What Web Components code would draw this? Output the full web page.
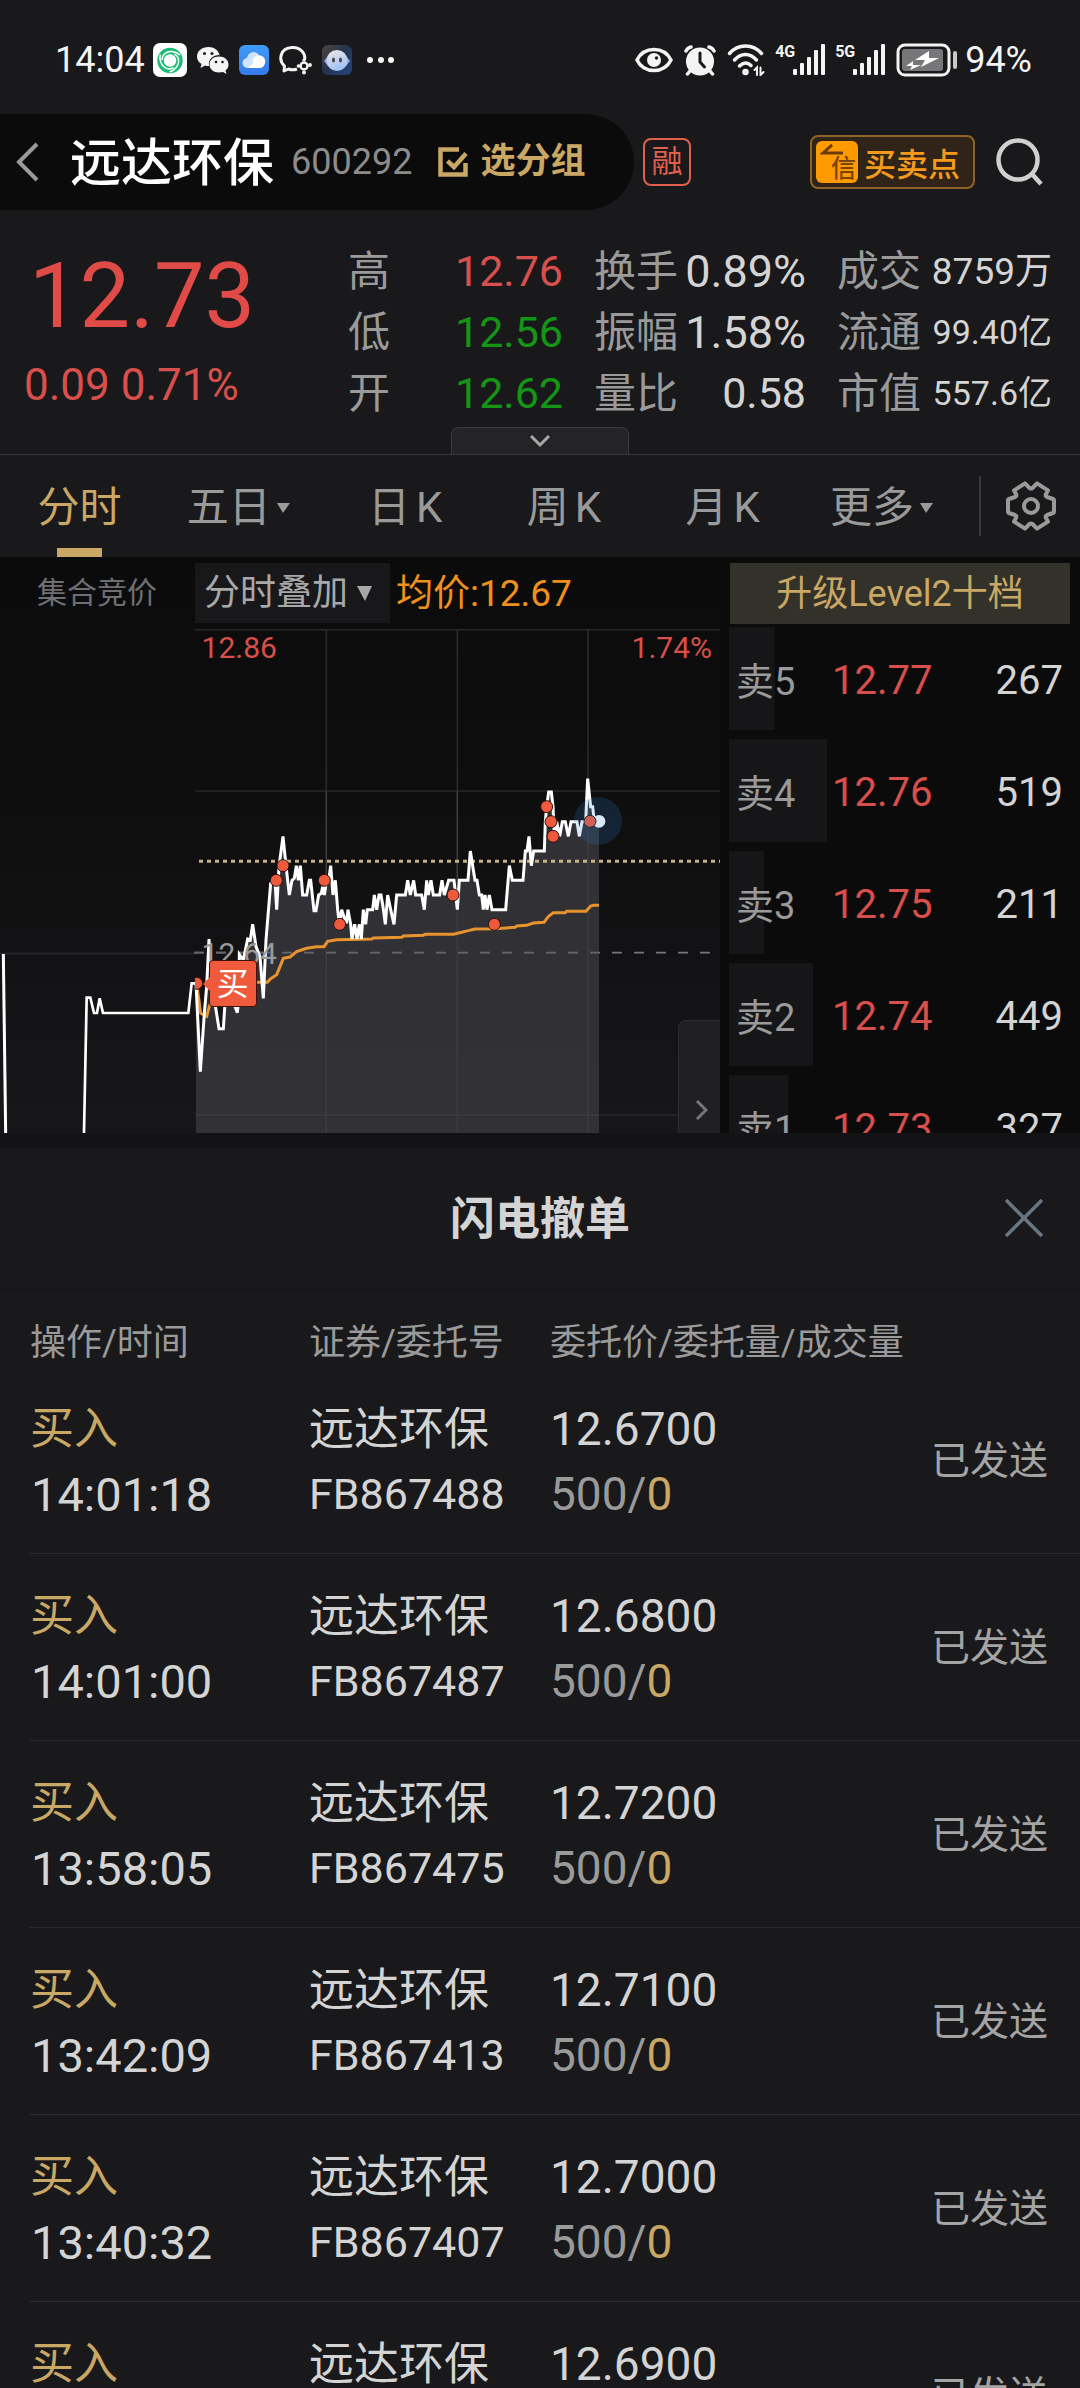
<!DOCTYPE html>
<html lang="zh-CN">
<head>
<meta charset="utf-8">
<meta name="viewport" content="width=device-width">
<title>远达环保 600292</title>
<style>
html,body{margin:0;padding:0;background:#19191b}
body{font-family:Roboto,"Noto Sans CJK SC",sans-serif;color:#d4d4d4;
--panel:#19191b;--dark:#0b0b0b;--gold:#c9a765;--grey:#9a9a9a;--text:#d4d4d4;--red:#d94f4b;--green:#159515;--line:#363638}
</style>
</head>
<body>
<stock-app></stock-app>
<script>
const RESET = `<style>
*{box-sizing:border-box}
button,select{font:inherit;color:inherit;background:none;border:0;padding:0;margin:0;appearance:none;text-align:inherit;border-radius:0}
a{color:inherit;text-decoration:none}
svg{display:block;flex:none}
</style>`;
const define = (name, html) => customElements.define(name, class extends HTMLElement {
  constructor() {
    super();
    this.attachShadow({ mode: 'open' }).innerHTML = RESET + (typeof html === 'function' ? html(this) : html);
  }
});

/* Signal strength with its network label */
define('signal-bars', `<style>
:host{display:flex;justify-content:space-between;align-items:flex-start;width:50px;height:32px}
span{font-size:16px;line-height:16px;font-weight:700;width:18px}
</style><span><slot></slot></span>
<svg width="32" height="32" fill="#f4f4f4"><rect x="0" y="25" width="4" height="6" rx="1"/><rect x="7" y="19" width="4" height="12" rx="1"/><rect x="14" y="13" width="4" height="18" rx="1"/><rect x="21" y="6" width="4" height="25" rx="1"/><rect x="28" y="0" width="4" height="31" rx="1"/></svg>`);

define('status-bar', `<style>
:host{display:flex;justify-content:space-between;align-items:center;height:114px;padding:5px 48px 0 55px;color:#f4f4f4;font-size:36px;line-height:40px}
div{display:flex;align-items:center}
.l{gap:10px}.r{gap:10px}
.l span{margin-right:-2px}
.batt{margin-right:-2px}
</style>
<div class="l"><span>14:04</span>
<svg width="34" height="34" viewBox="0 0 34 34"><rect width="34" height="34" rx="7" fill="#fff"/><circle cx="17" cy="17.500" r="9.500" fill="none" stroke="#1cbb76" stroke-width="6.500"/><g fill="none" stroke="#fff" stroke-width="1.500"><path d="M9 17C9 12 13 8 19 8.500C23 9 25 10 27 12"/><path d="M9 17C9 12 13 8 19 8.500C23 9 25 10 27 12" transform="rotate(120 17 17.500)"/><path d="M9 17C9 12 13 8 19 8.500C23 9 25 10 27 12" transform="rotate(240 17 17.500)"/></g></svg>
<svg width="32" height="30" viewBox="0 0 32 30"><g fill="#f4f4f4"><path d="M11.500 2C5 2 0 6 0 11.500C0 15 2 17.500 4.500 19L3.500 23L8 20.500C9 21 10.500 21 12 21C11 14 16 10 22.500 10C21.500 5 17 2 11.500 2Z"/><path d="M22 11.500C16.500 11.500 12.500 15 12.500 19.500C12.500 24 16.500 27.500 22 27.500C23.500 27.500 24.500 27.300 26 27L29.500 29L28.500 25.500C30.500 24 31.500 22 31.500 19.500C31.500 15 27.500 11.500 22 11.500Z"/></g><g fill="#19191b"><circle cx="7.500" cy="8.500" r="1.500"/><circle cx="15" cy="8.500" r="1.500"/><circle cx="19" cy="17" r="1.300"/><circle cx="25.500" cy="17" r="1.300"/></g></svg>
<svg width="30" height="30" viewBox="0 0 30 30"><defs><linearGradient id="b" x2="0" y2="1"><stop stop-color="#3f9cf8"/><stop offset="1" stop-color="#3479ec"/></linearGradient></defs><rect width="30" height="30" rx="6" fill="url(#b)"/><g fill="#cfe4ff"><circle cx="8.500" cy="18" r="5"/><circle cx="14.500" cy="13.500" r="6.500"/></g><circle cx="20" cy="16.500" r="6.300" fill="#fff"/><path d="M8 23H21A5 5 0 0 0 20 13C15 13 14 21 8 23Z" fill="#fff"/></svg>
<svg width="33" height="30" viewBox="0 0 33 30" fill="none" stroke="#f4f4f4"><path d="M18 24C14 25.500 12 25 9.500 24L5 26L5.500 21C-1 15 1 3 13 2.500C21 2 27 8 25.500 15" stroke-width="3" stroke-linejoin="round"/><circle cx="25" cy="21" r="3.500" stroke-width="2.500"/><g fill="#f4f4f4" stroke="none"><circle cx="19.500" cy="21" r="1.800"/><circle cx="31" cy="20" r="1.900"/><circle cx="25" cy="27.500" r="2"/><circle cx="25" cy="15" r="1.600"/></g></svg>
<svg width="30" height="30" viewBox="0 0 30 30"><defs><linearGradient id="c" x2="1" y2="1"><stop stop-color="#51443c"/><stop offset=".5" stop-color="#223450"/><stop offset="1" stop-color="#2a457e"/></linearGradient><linearGradient id="d" x2=".3" y2="1"><stop stop-color="#f2e7e2"/><stop offset="1" stop-color="#9fc3f4"/></linearGradient></defs><rect width="30" height="30" rx="6" fill="url(#c)"/><path d="M2 16L6 11V21ZM28 16L24 11V21Z" fill="#8fa9dd"/><circle cx="15" cy="15.500" r="10.500" fill="url(#d)"/><ellipse cx="11.500" cy="15" rx="1.500" ry="2.500" fill="#4a4250"/><ellipse cx="18.500" cy="15" rx="1.500" ry="2.500" fill="#4a4250"/></svg>
<svg width="36" height="6" fill="#f4f4f4"><circle cx="8" cy="3" r="3"/><circle cx="19" cy="3" r="3"/><circle cx="29" cy="3" r="3"/></svg>
</div>
<div class="r">
<svg width="38" height="28" viewBox="0 0 38 28"><path d="M2 14C9 0 29 0 36 14C29 28 9 28 2 14Z" fill="none" stroke="#f4f4f4" stroke-width="3.500"/><circle cx="19" cy="14" r="7" fill="#f4f4f4"/><circle cx="21.500" cy="12" r="1.700" fill="#19191b"/></svg>
<svg width="34" height="32" viewBox="0 0 34 32"><circle cx="17" cy="17.500" r="14" fill="#f4f4f4"/><g stroke="#f4f4f4" stroke-width="3.500" stroke-linecap="round" fill="none"><path d="M3 7C4 5 6 3.500 8 3M31 7C30 5 28 3.500 26 3M7 27L4.500 30M27 27L29.500 30"/></g><path d="M17 9V18L21.500 23" stroke="#19191b" stroke-width="3" fill="none" stroke-linecap="round"/></svg>
<svg width="38" height="32" viewBox="0 0 38 32" fill="none" stroke="#f4f4f4" stroke-width="3.500" stroke-linecap="round"><path d="M2.500 9.500C11-.5 26-.5 34.500 9.500M7.500 16C14 8.500 23 8.500 29.500 16M12.500 22C16.500 18 20.500 18 24 21.500"/><circle cx="18.500" cy="28" r="1.500"/><path d="M30 31V23.500L27.500 26M33.500 23.500V31L36.500 28" stroke-width="2" /></svg>
<signal-bars>4G</signal-bars><signal-bars>5G</signal-bars>
<svg class="batt" width="62" height="34" viewBox="0 0 62 34"><rect x="3" y="2" width="51" height="30" rx="7" fill="none" stroke="#f4f4f4" stroke-width="3"/><rect x="7" y="6" width="41" height="22" rx="3" fill="#77777a"/><path d="M34 8L20 17H30L26 24L44 15H34ZM18 18L11 23H17L15 27L26 22H18Z" fill="#fff"/><rect x="58" y="8" width="4" height="18" rx="2" fill="#c9c9c9"/></svg>
<span>94%</span></div>`);

define('quote-header', `<style>
:host{display:flex;align-items:center;height:96px;padding-right:36px}
.pill{display:flex;align-items:center;height:96px;width:634px;background:var(--dark);border-radius:0 48px 48px 0;padding-left:16px}
h1{margin:0 17px 0 31px;padding-top:4px;font-size:51px;line-height:60px;font-weight:500;color:#fff}
.code{font-size:36px;color:#8c8c8c;margin-right:26px}
.group{display:flex;align-items:center;gap:12px;color:var(--gold);font-weight:700;font-size:35px;line-height:40px}
.rong{margin-left:9px;width:48px;height:48px;border:2px solid #e0604c;border-radius:8px;font-size:31px;line-height:44px;text-align:center;color:#e0604c}
.points{margin-left:auto;display:flex;align-items:center;height:54px;width:165px;background:#2f2417;border:2px solid #8f6427;border-radius:8px;padding-left:4px;gap:6px;font-size:32px;font-weight:500;color:#f59a1c}
.tile{display:flex;align-items:flex-end;justify-content:flex-end;position:relative;width:42px;height:42px;border-radius:6px;background:#ff9a00;color:#7a4300;font-size:25px;line-height:28px;font-weight:500;padding-right:2px}
.tile svg{position:absolute;left:4px;top:3px}
.search{margin-left:21px}
</style>
<div class="pill"><button aria-label="返回"><svg width="23" height="40" viewBox="0 0 23 40" fill="none" stroke="#9a9a9a" stroke-width="4"><path d="M21 2L3 20L21 38"/></svg></button>
<h1>远达环保</h1><span class="code">600292</span>
<button class="group"><svg width="30" height="30" viewBox="0 0 30 30" fill="none" stroke="#c9a765" stroke-width="4.500"><path d="M21 2.500H2.500V27.500H27.500V16M9.500 14L16 20L28 6.500"/></svg>选分组</button></div>
<span class="rong">融</span>
<button class="points"><span class="tile"><svg width="26" height="12" viewBox="0 0 26 12" fill="none" stroke="#6b3b00" stroke-width="3"><path d="M12 1L3 9H23"/></svg>信</span>买卖点</button>
<button class="search" aria-label="搜索"><svg width="48" height="48" viewBox="0 0 48 48" fill="none" stroke="#d0d0d0" stroke-width="4.500"><circle cx="22" cy="22" r="19.500"/><path d="M36 36L45 46"/></svg></button>`);

/* One label with its value */
define('quote-stat', `<style>
:host{display:flex;justify-content:space-between;align-items:center;font-size:43px;line-height:61px;color:var(--text)}
:host([tone=up]){color:var(--red)}:host([tone=down]){color:var(--green)}
:host([size=l]){font-size:45px}:host([size=m]){font-size:37px}:host([size=s]){font-size:34px}
.k{font-size:42px;color:var(--grey)}
</style><span class="k"><slot name="label"></slot></span><span><slot></slot></span>`);
const stat = (k, v, extra = '') => `<quote-stat ${extra}><span slot="label">${k}</span>${v}</quote-stat>`;

define('quote-stats', `<style>
:host{display:grid;grid-template-columns:348px 215px 1fr 215px;position:relative;height:245px;padding:31px 28px 0 0;border-bottom:1px solid var(--line)}
.main{padding-left:24px;color:#e04b48}
.big{font-size:90px;line-height:112px;padding-left:5px}
.chg{font-size:44px;line-height:64px;color:var(--red)}
.mid{padding:0 31px}
.pull{position:absolute;left:50%;bottom:0;transform:translateX(-50%);width:178px;height:27px;background:#242427;border:1px solid #3c3c3f;border-bottom:0;border-radius:8px 8px 0 0;display:grid;place-items:center}
</style>
<div class="main"><div class="big">12.73</div><div class="chg">0.09 0.71%</div></div>
<div>${stat('高','12.76','tone="up"')}${stat('低','12.56','tone="down"')}${stat('开','12.62','tone="down"')}</div>
<div class="mid">${stat('换手','0.89%','size="l"')}${stat('振幅','1.58%','size="l"')}${stat('量比','0.58')}</div>
<div>${stat('成交','8759万','size="m"')}${stat('流通','99.40亿','size="s"')}${stat('市值','557.6亿','size="s"')}</div>
<button class="pull" aria-label="展开"><svg width="20" height="14" viewBox="0 0 20 14" fill="none" stroke="#a8a8a8" stroke-width="3"><path d="M1 2L10 11L19 2"/></svg></button>`);

define('period-tab', el => `<style>
:host{display:flex;flex:1;justify-content:center}
:host([menu]){padding-right:8px}
button{display:flex;align-items:center;gap:6px;position:relative;height:102px;font-size:42px;line-height:60px;color:var(--grey);padding-top:4px}
:host([active]) button{color:var(--gold)}
:host([active]) button::after{content:"";position:absolute;left:50%;bottom:0;width:45px;margin-left:-22px;height:9px;background:var(--gold)}
</style><button><slot></slot>${el.hasAttribute('menu') ? '<svg width="13" height="10"><path d="M0 0H13L6 10Z" fill="#9a9a9a"/></svg>' : ''}</button>`);

define('period-tabs', `<style>
:host{display:flex;align-items:center;height:102px}
nav{display:flex;flex:1}
hr{width:2px;height:60px;margin:0 22px 0 10px;border:0;background:#3a3a3c}
.set{margin-right:21px}
</style>
<nav><period-tab active>分时</period-tab><period-tab menu>五日</period-tab><period-tab><span>日</span><span>K</span></period-tab><period-tab><span>周</span><span>K</span></period-tab><period-tab><span>月</span><span>K</span></period-tab><period-tab menu>更多</period-tab></nav><hr>
<button class="set" aria-label="设置"><svg width="56" height="56" viewBox="-28 -28 56 56" fill="none" stroke="#9a9a9a" stroke-width="4" stroke-linejoin="round"><path d="M22-7Q23-7 23-5V5Q23 7 22 7L16 9Q14 10 15 12L17 15.600L6 22.600L1.500 18Q0 17-1.500 18L-6 22.600L-17 15.600L-15 12Q-14 10-16 9L-22 7Q-23 7-23 5V-5Q-23-7-22-7L-16-9Q-14-10-15-12L-17-15.600L-6-22.600L-1.500-18Q0-17 1.500-18L6-22.600L17-15.600L15-12Q14-10 16-9Z"/><circle r="7"/></svg></button>`);

const PRICE = "48,730 61,995 73,820 80,740 87,597 92,680 100,760 117,866 130,866 135,790 150,730 165,800 172,818 176,780 178,643 190,660 203,597 211,600 218,553 228,620 240,650 250,775 258,600 272,430 285,421 290,509 297,380 309,289 318,377 328,465 336,421 343,415 349,377 355,421 361,377 368,465 380,465 388,421 392,421 402,512 408,512 416,465 424,460 428,440 433,465 440,421 446,421 452,377 459,465 466,421 473,509 478,553 485,509 492,530 499,550 504,509 512,553 516,597 524,553 531,597 538,553 544,597 550,509 557,553 562,509 578,509 583,465 590,509 597,465 603,465 609,500 616,553 623,465 632,509 642,553 650,465 676,465 683,421 691,465 701,421 707,465 725,465 733,509 740,421 745,465 753,421 760,465 779,465 786,421 793,465 806,421 822,421 832,509 838,421 864,421 871,333 880,390 885,421 891,421 898,465 905,465 910,509 915,465 921,509 928,465 936,509 977,509 988,377 997,421 1029,421 1036,333 1041,333 1047,289 1054,377 1061,333 1093,333 1096,245 1100,200 1106,156 1114,156 1119,200 1123,289 1130,245 1139,289 1147,245 1156,245 1165,289 1173,245 1191,245 1198,289 1206,245 1217,245 1223,116 1232,200 1238,200 1243,245 1257,245";
const AVG = "50,730 62,820 80,829 88,800 100,760 150,727 262,727 272,716 290,704 300,680 310,655 330,651 350,635 380,625 410,620 432,620 443,604 470,599 575,597 580,594 665,592 670,588 730,586 735,583 820,583 845,577 865,572 885,567 945,566 1005,562 1010,558 1040,556 1060,549 1092,547 1105,530 1120,518 1155,518 1160,514 1218,514 1232,498 1240,496 1257,496";
const DOTS = [[50,730],[289,421],[309,377],[433,421],[479,553],[819,465],[943,553],[1100,200],[1113,245],[1119,289],[1230,244]];

define('price-chart', `<style>
:host{display:block;background:linear-gradient(#0b0b0b,#0e0e0f 40%,#17171a)}
.bar{display:flex;align-items:center;height:72px}
.call{width:195px;padding:0 0 6px 37px;font-size:30px;color:#6f6f73}
.pick{position:relative;width:195px;height:60px;background:#18181b;margin-right:6px}
select{width:100%;height:60px;padding-left:9px;font-size:36px;line-height:60px;color:#a8a8a8}
.pick svg{position:absolute;right:18px;top:23px;pointer-events:none}
.avg{font-size:37px;padding-bottom:6px;color:#f0901c;white-space:nowrap}
.plot{position:relative;height:504px}
.plot>svg{width:100%;height:504px}
.lab{position:absolute;font-size:30px;line-height:36px;color:var(--red)}
.hi{left:28%;top:1px}.pc{right:8px;top:1px}.mid{left:28%;top:307px;color:#9a9a9a}
.buy{position:absolute;left:29%;top:331px;width:48px;height:47px;background:#f05a3c;border:1px solid #40110b;border-radius:4px;color:#fff;font-size:32px;line-height:46px;text-align:center}
.buy::before{content:"";position:absolute;left:-7px;top:16px;border:solid transparent;border-width:7px 7px 7px 0;border-right-color:#f05a3c}
.more{position:absolute;right:0;bottom:0;width:42px;height:113px;background:#202022;border:1px solid #2c2c2f;border-width:1px 0 0 1px;border-radius:8px 0 0 0;padding:66px 0 0 16px}
</style>
<div class="bar"><span class="call">集合竞价</span><span class="pick"><select aria-label="分时叠加"><option>分时叠加</option></select><svg width="15" height="15"><path d="M0 0H15L8 15Z" fill="#a8a8a8"/></svg></span><span class="avg">均价:12.67</span></div>
<div class="plot"><svg viewBox="0 0 2160 1512" preserveAspectRatio="none" fill="none">
<defs><clipPath id="k"><rect x="585" y="0" width="1575" height="1512"/></clipPath></defs>
<g stroke="#29292b" stroke-width="5"><path d="M585 2H2160M585 486H2160M0 974H585M585 1458H2160M979 0V1512M1372 0V1512M1764 0V1512"/></g>
<path d="M582 971H2160" stroke="#77777a" stroke-width="5" stroke-dasharray="30 36"/>
<g transform="translate(540 333)"><polygon points="48,1179 ${PRICE} 1257,1179" fill="#35353a" fill-opacity=".88"/></g>
<path d="M979 486V1512M1372 486V1512M1764 486V1512M588 1458H1797" stroke="#3d3d41" stroke-width="4"/>
<path d="M582 971H1797" stroke="#65656a" stroke-width="5" stroke-dasharray="30 36"/>
<path d="M597 697H2160" stroke="#c9b281" stroke-width="9" stroke-dasharray="12 12"/>
<polyline points="10,975 17,1512" stroke="#fff" stroke-width="9"/>
<polyline points="252,1512 260,1106 271,1106 282,1152 291,1152 299,1108 309,1152 565,1152 575,1063 591,1063" stroke="#fff" stroke-width="8"/>
<g transform="translate(540 333)" stroke-width="9"><polyline points="${AVG}" stroke="#e8942e"/><polyline points="${PRICE}" stroke="#fff"/></g>
<g clip-path="url(#k)"><g transform="translate(540 333)" fill="#f05a3c" stroke="#26100c" stroke-width="3"><circle cx="1257" cy="244" r="19" fill="#fff" stroke="none"/>${DOTS.map(([x, y]) => `<circle cx="${x}" cy="${y}" r="18"/>`).join('')}<circle cx="1254" cy="243" r="72" fill="#2c86d8" fill-opacity=".18" stroke="none"/></g></g>
</svg>
<span class="lab hi">12.86</span><span class="lab pc">1.74%</span><span class="lab mid">12.64</span><span class="buy">买</span>
<button class="more" aria-label="收起盘口"><svg width="13" height="22" viewBox="0 0 13 22" fill="none" stroke="#77777a" stroke-width="3"><path d="M2 2L11 11L2 20"/></svg></button></div>`);

define('book-level', el => `<style>
:host{display:flex;align-items:center;height:103px;margin-bottom:9px;padding:0 17px 0 7px;font-size:40px;color:var(--text);
background:linear-gradient(#161618,#161618) no-repeat 0 0/${el.getAttribute('depth')}% 100%}
.n{width:96px;font-size:38px;color:var(--grey)}.p{flex:1;color:var(--red)}
.p,.q{padding-top:4px}
</style><span class="n">${el.getAttribute('name')}</span><span class="p">${el.getAttribute('price')}</span><span class="q">${el.getAttribute('qty')}</span>`);

define('order-book', `<style>
:host{display:block;background:var(--dark);padding:6px 0 0 9px;overflow:hidden}
.up{display:block;width:calc(100% - 11px);margin:0 0 3px 1px;padding-top:2px;height:61px;background:#32312a;color:var(--gold);font-size:36px;line-height:59px;text-align:center}
</style><button class="up">升级Level2十档</button>
<book-level name="卖5" price="12.77" qty="267" depth="13"></book-level>
<book-level name="卖4" price="12.76" qty="519" depth="28"></book-level>
<book-level name="卖3" price="12.75" qty="211" depth="10"></book-level>
<book-level name="卖2" price="12.74" qty="449" depth="24"></book-level>
<book-level name="卖1" price="12.73" qty="327" depth="17"></book-level>`);

const ORDERS = [['14:01:18','FB867488','12.6700'],['14:01:00','FB867487','12.6800'],['13:58:05','FB867475','12.7200'],['13:42:09','FB867413','12.7100'],['13:40:32','FB867407','12.7000'],['13:38:47','FB867402','12.6900']];
define('cancel-sheet', `<style>
:host{display:block;background:var(--panel);border-top:15px solid #131315}
header{display:flex;justify-content:center;align-items:center;position:relative;height:142px;padding-top:3px;border-bottom:1px solid #131315}
h2{margin:0;font-size:45px;line-height:60px;font-weight:700}
.x{position:absolute;right:36px;top:50px}
table{width:calc(100% - 30px);margin-left:30px;border-spacing:0;table-layout:fixed}
th,td{padding:0;text-align:left;font-weight:400}
th{height:77px;padding-top:29px;font-size:36px;line-height:48px;color:var(--grey);white-space:nowrap}
td{height:187px;padding-top:3px;border-bottom:1px solid #2b2b2d;line-height:65px;white-space:nowrap}
.c1{width:279px}.c2{width:241px}.c4{width:150px}
.side{font-size:44px;color:var(--gold)}.time{font-size:47px;padding-left:1px}.name{font-size:45px}.no{font-size:43px}.price{font-size:46px}.vol{font-size:46px;color:var(--grey)}
b{font-weight:400;color:var(--gold)}
td:last-child{font-size:39px;color:#a4a4a4;text-align:right;padding-right:32px}
</style>
<header><h2>闪电撤单</h2><button class="x" aria-label="关闭"><svg width="40" height="40" viewBox="0 0 40 40" stroke="#687683" stroke-width="3.500"><path d="M2 2L38 38M38 2L2 38"/></svg></button></header>
<table><thead><tr><th class="c1">操作/时间</th><th class="c2">证券/委托号</th><th>委托价/委托量/成交量</th><th class="c4"></th></tr></thead>
<tbody>${ORDERS.map(([t, n, p]) => `<tr><td><div class="side">买入</div><div class="time">${t}</div></td><td><div class="name">远达环保</div><div class="no">${n}</div></td><td><div class="price">${p}</div><div class="vol">500/<b>0</b></div></td><td>已发送</td></tr>`).join('')}</tbody></table>`);

define('stock-app', `<style>
:host{display:flex;flex-direction:column;height:100vh;overflow:hidden;background:var(--panel)}
:host>*{flex:none}
.market{display:grid;grid-template-columns:minmax(0,2fr) minmax(0,1fr);height:576px;overflow:hidden}
</style>
<status-bar></status-bar><quote-header></quote-header><quote-stats></quote-stats><period-tabs></period-tabs>
<div class="market"><price-chart></price-chart><order-book></order-book></div>
<cancel-sheet></cancel-sheet>`);
</script>
</body>
</html>
